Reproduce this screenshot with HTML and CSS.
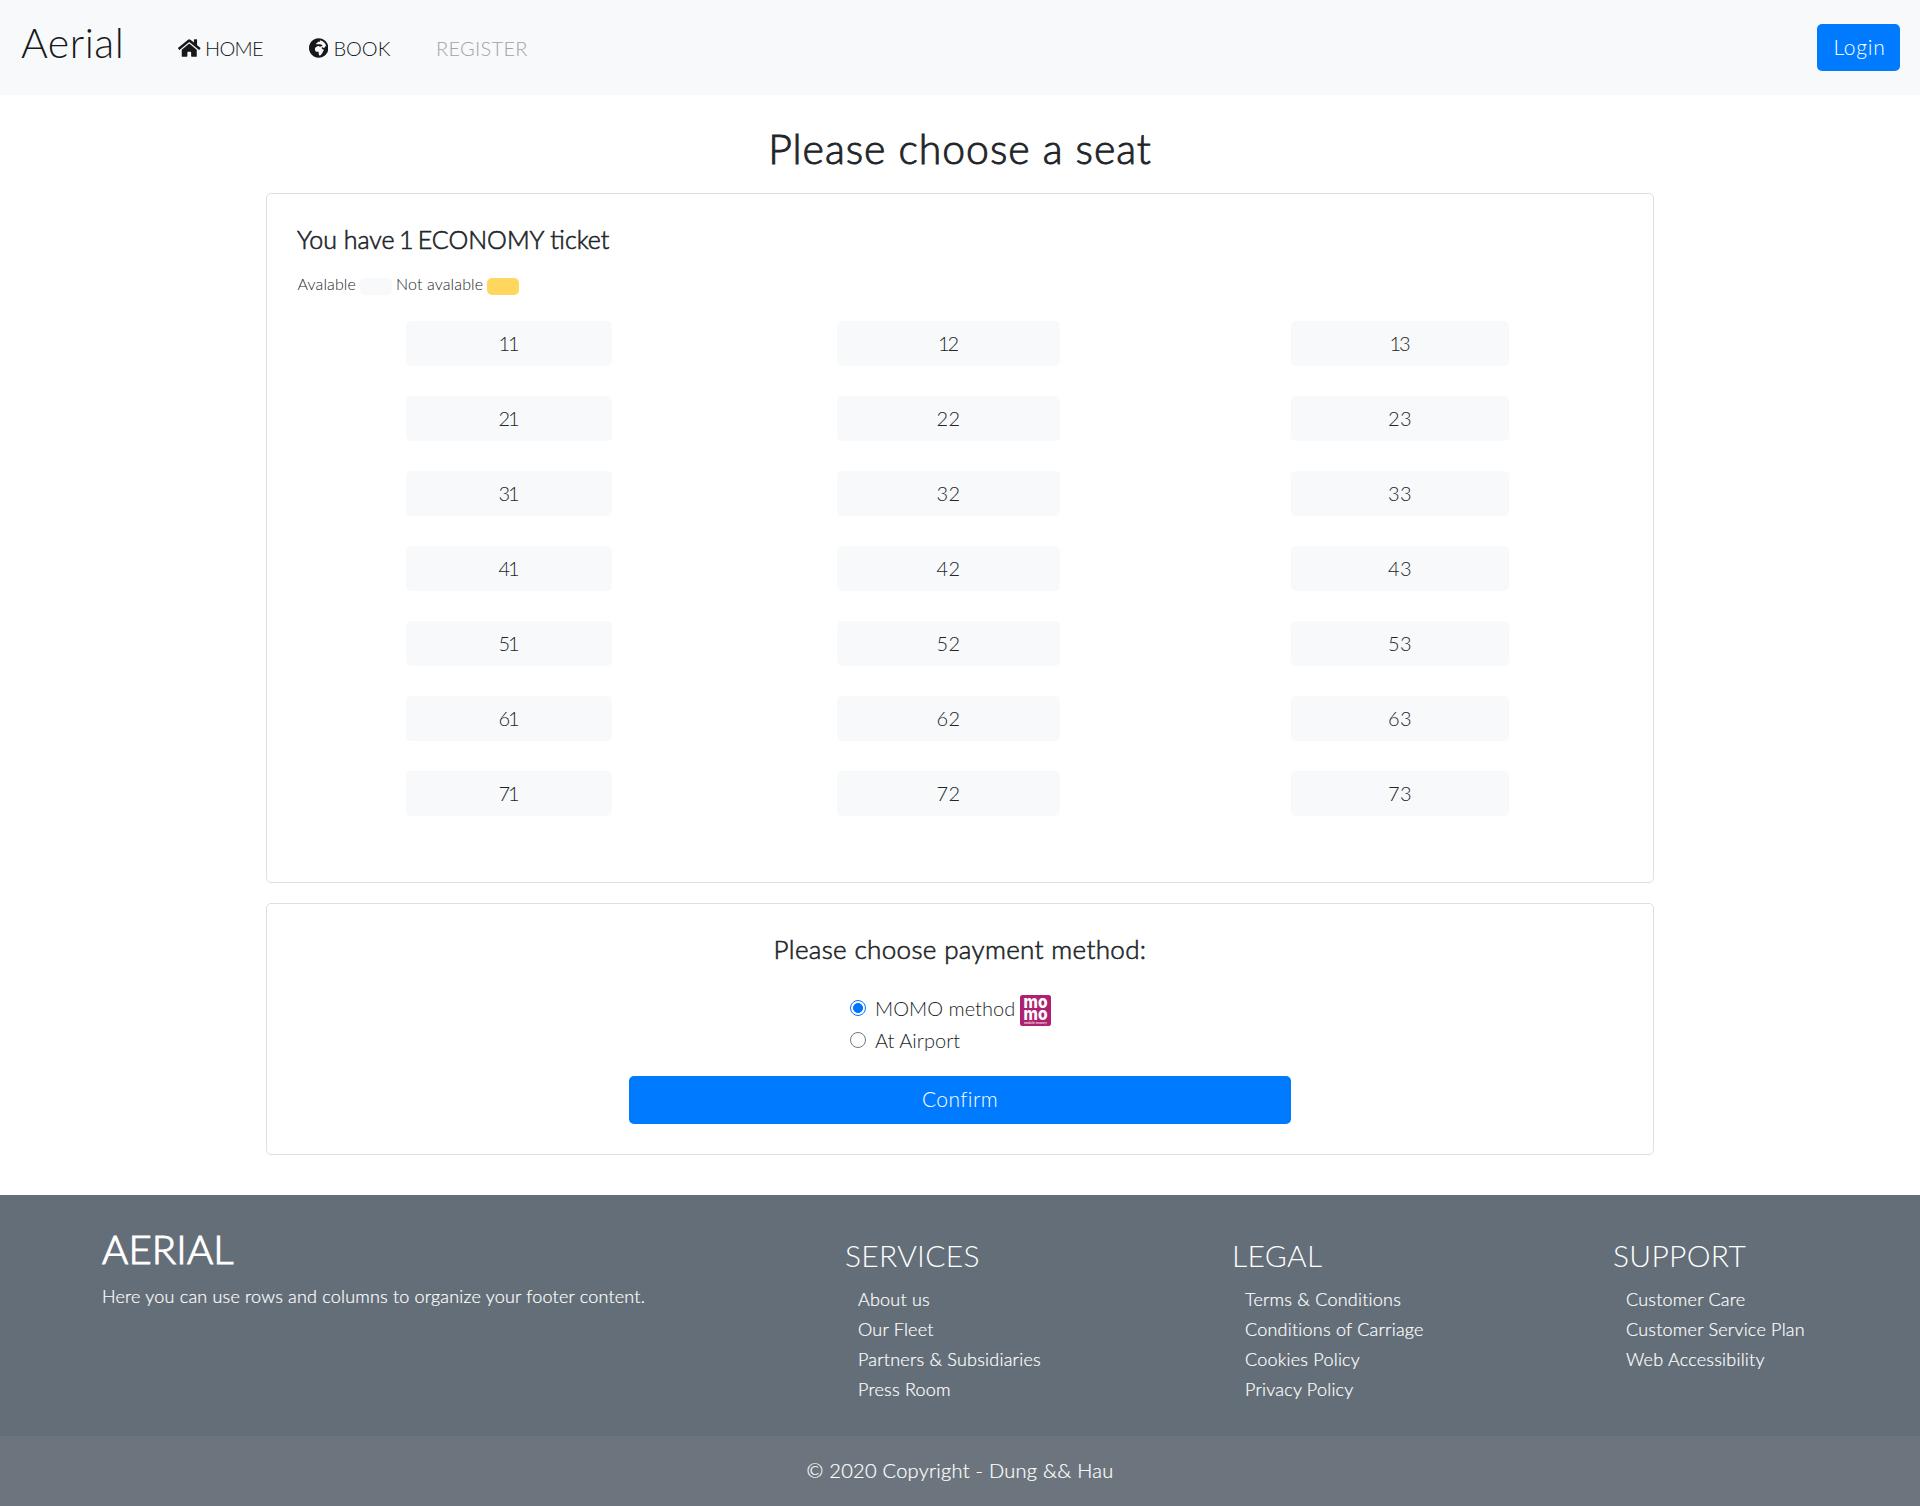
FILE: index.html
```html
<!DOCTYPE html>
<html lang="en">
<head>
<meta charset="utf-8">
<title>Aerial</title>
<link rel="stylesheet" href="styles.css">
</head>
<body>
<nav class="navbar">
  <a class="brand">Aerial</a>
  <a class="nav-link nav-home"><svg class="icon-home" viewBox="0 0 576 512"><path d="M280.37 148.26L96 300.11V464a16 16 0 0 0 16 16l112.06-.29a16 16 0 0 0 15.92-16V368a16 16 0 0 1 16-16h64a16 16 0 0 1 16 16v95.64a16 16 0 0 0 16 16.05L464 480a16 16 0 0 0 16-16V300L295.67 148.26a12.19 12.19 0 0 0-15.3 0zM571.6 251.47L488 182.56V44.05a12 12 0 0 0-12-12h-56a12 12 0 0 0-12 12v72.61L318.47 43a48 48 0 0 0-61 0L4.34 251.47a12 12 0 0 0-1.6 16.9l25.5 31A12 12 0 0 0 45.15 301l235.22-193.74a12.19 12.19 0 0 1 15.3 0L530.9 301a12 12 0 0 0 16.9-1.6l25.5-31a12 12 0 0 0-1.7-16.93z"/></svg>HOME</a>
  <a class="nav-link nav-book"><svg class="icon-globe" viewBox="0 0 496 512"><path d="M248 8C111.03 8 0 119.03 0 256s111.03 248 248 248 248-111.03 248-248S384.97 8 248 8zm160 215.5v6.93c0 5.87-3.32 11.24-8.57 13.86l-15.39 7.7a15.485 15.485 0 0 1-15.53-.97l-18.21-12.14a15.52 15.52 0 0 0-13.5-1.81l-2.65.88c-9.7 3.23-13.66 14.79-7.99 23.3l13.24 19.86c2.87 4.31 7.71 6.9 12.89 6.9h8.21c8.56 0 15.5 6.94 15.5 15.5v11.34c0 3.35-1.09 6.62-3.1 9.3l-18.74 24.98c-1.42 1.9-2.39 4.1-2.83 6.43l-4.3 22.83c-.62 3.29-2.29 6.29-4.76 8.56a159.608 159.608 0 0 0-25 29.16l-13.03 19.55a27.756 27.756 0 0 1-23.09 12.36c-10.51 0-20.12-5.94-24.82-15.34a78.902 78.902 0 0 1-8.33-35.29V367.5c0-8.56-6.94-15.5-15.5-15.5h-25.88c-14.49 0-28.38-5.76-38.63-16a54.659 54.659 0 0 1-16-38.63v-14.06c0-17.19 8.1-33.38 21.85-43.7l27.58-20.69a54.663 54.663 0 0 1 32.78-10.93h.89c8.48 0 16.85 1.97 24.43 5.77l14.72 7.36c3.68 1.84 7.93 2.14 11.83.84l47.31-15.77c6.33-2.11 10.6-8.03 10.6-14.7 0-8.56-6.94-15.5-15.5-15.5h-10.09c-4.11 0-8.05-1.63-10.96-4.54l-6.92-6.92a15.493 15.493 0 0 0-10.96-4.54H199.5c-8.56 0-15.5-6.94-15.5-15.5v-4.4c0-7.11 4.84-13.31 11.74-15.04l14.45-3.61c3.74-.94 7-3.23 9.14-6.44l8.08-12.11c2.87-4.31 7.71-6.9 12.89-6.9h24.21c8.56 0 15.5-6.94 15.5-15.5v-21.7C359.23 71.63 422.86 131.02 441.93 208H423.5c-8.56 0-15.5 6.94-15.5 15.5z"/></svg>BOOK</a>
  <a class="nav-link nav-muted">REGISTER</a>
  <button class="btn btn-login">Login</button>
</nav>
<main class="container">
  <h1 class="page-title">Please choose a seat</h1>
  <section class="card card-seats">
    <h2 class="card-title">You have <span class="count">1</span> ECONOMY ticket</h2>
    <p class="legend"><span>Avalable</span><i class="swatch"></i><span>Not avalable</span><i class="swatch swatch-taken"></i></p>
    <div class="seats">
      <button class="seat one">11</button><button class="seat one">12</button><button class="seat one">13</button>
      <button class="seat one">21</button><button class="seat">22</button><button class="seat">23</button>
      <button class="seat one">31</button><button class="seat">32</button><button class="seat">33</button>
      <button class="seat one">41</button><button class="seat">42</button><button class="seat">43</button>
      <button class="seat one">51</button><button class="seat">52</button><button class="seat">53</button>
      <button class="seat one">61</button><button class="seat">62</button><button class="seat">63</button>
      <button class="seat one">71</button><button class="seat">72</button><button class="seat">73</button>
    </div>
  </section>
  <section class="card card-payment">
    <h2 class="card-title payment-title">Please choose payment method:</h2>
    <div class="options">
      <label class="option"><input class="radio" type="radio" name="pay" checked><span>MOMO method</span>
        <svg class="momo" viewBox="0 0 31 31"><rect width="31" height="31" rx="2.5" fill="#ae2070"/><g class="momo-big"><text x="3.6" y="12.8" textLength="24" lengthAdjust="spacingAndGlyphs">mo</text><text x="3.6" y="25" textLength="24" lengthAdjust="spacingAndGlyphs">mo</text></g><text class="momo-small" x="4" y="28.8" textLength="23" lengthAdjust="spacingAndGlyphs">mobile money</text></svg></label>
      <label class="option"><input class="radio" type="radio" name="pay"><span>At Airport</span></label>
    </div>
    <button class="btn btn-confirm">Confirm</button>
  </section>
</main>
<footer class="footer">
  <div class="footer-main">
    <div><h2 class="footer-brand">AERIAL</h2><p class="footer-text">Here you can use rows and columns to organize your footer content.</p></div>
    <div class="footer-col"><h3 class="footer-title">SERVICES</h3><ul class="links"><li>About us</li><li>Our Fleet</li><li>Partners &amp; Subsidiaries</li><li>Press Room</li></ul></div>
    <div class="footer-col"><h3 class="footer-title">LEGAL</h3><ul class="links"><li>Terms &amp; Conditions</li><li>Conditions of Carriage</li><li>Cookies Policy</li><li>Privacy Policy</li></ul></div>
    <div class="footer-col"><h3 class="footer-title">SUPPORT</h3><ul class="links"><li>Customer Care</li><li>Customer Service Plan</li><li>Web Accessibility</li></ul></div>
  </div>
  <div class="copyright">© 2020 Copyright - Dung &amp;&amp; Hau</div>
</footer>
</body>
</html>
```
FILE: styles.css
```css
* { box-sizing: border-box; }
body { margin: 0; background: #fff; color: #212529; font: 300 20px/1.5 Lato, "Open Sans", sans-serif; font-kerning: normal; }
h1, h2, h3, p, ul { margin: 0; padding: 0; font-weight: 300; }
button { font: inherit; border: 0; padding: 0; border-radius: 5px; }

.navbar { display: flex; align-items: center; height: 95px; padding: 0 20px; background: #f8f9fb; }
.brand { width: 157px; margin-bottom: 10px; padding-left: 1px; font-size: 41px; line-height: 60px; letter-spacing: .5px; color: #16181b; }
.nav-link { display: flex; align-items: center; line-height: 30px; color: #16181b; }
.nav-home { width: 131px; gap: 4.5px; letter-spacing: -.7px; }
.nav-book { width: 128px; gap: 5px; }
.nav-muted { color: #a0a3a6; letter-spacing: .3px; }
.icon-home { width: 22.5px; height: 20px; margin-left: 1px; fill: #16181b; }
.icon-globe { width: 19.4px; height: 20px; margin-left: 1px; fill: #16181b; }

.btn { background: #007bff; color: #fff; }
.btn-login { width: 83px; height: 47px; margin-left: auto; padding: 0 0 1px 2px; font-size: 21px; letter-spacing: .8px; }

.container { width: 1388px; margin: 0 auto 40px; }
.page-title { padding: 30px 0 20px; font-size: 41px; line-height: 48px; text-align: center; letter-spacing: .95px; -webkit-text-stroke: .9px; }
.card { border: 1px solid #dfdfdf; border-radius: 5px; padding: 30px; }
.card-seats { height: 690px; margin-bottom: 20px; }
.card-title { font-size: 25px; line-height: 30px; -webkit-text-stroke: .6px; }
.count { margin: 0 -2.5px; }
.legend { display: flex; align-items: center; gap: 4px; height: 24px; margin: 18px 0 25px; padding-left: .5px; font-size: 16px; line-height: 24px; letter-spacing: .13px; }
.swatch { width: 32px; height: 17px; margin-top: 5px; border-radius: 5px; background: #f8f9fb; }
.swatch-taken { background: #ffd75e; }
.seats { display: grid; grid-template-columns: 206px 223px 224px; grid-auto-rows: 45px; gap: 30px 225px; padding-left: 109px; }
.seat { padding-bottom: 2px; background: #f8f9fb; color: #212529; letter-spacing: .4px; }
.seat:nth-child(3n) { margin-left: 6px; }
.one { padding-right: 2px; letter-spacing: -2.2px; }

.card-payment { display: flex; flex-direction: column; align-items: center; height: 252px; }
.payment-title { font-size: 26px; letter-spacing: .35px; }
.options { width: 220px; margin: 28px 0 20px; }
.option { display: flex; align-items: center; height: 32px; letter-spacing: .03px; }
.radio { appearance: none; width: 16px; height: 16px; margin: 0 9px 0 0; border: 1px solid #767676; border-radius: 50%; }
.radio:checked { border-color: #0075ff; background: radial-gradient(circle, #0075ff 0 4.6px, #fff 5.3px); }
.momo { width: 31px; height: 31px; margin: 0 0 -5px 5px; overflow: visible; }
.momo text { fill: #fff; font-family: Inter, sans-serif; }
.momo-big { font-size: 18px; font-weight: 800; }
.momo-small { font-size: 3px; font-weight: 700; opacity: .75; }
.btn-confirm { width: 662px; height: 48px; padding-bottom: 2px; font-size: 21px; letter-spacing: .4px; }

.footer { color: #fff; background: #646e78; }
.footer-main { display: grid; grid-template-columns: 743px 387px 381px auto; height: 241px; padding: 30px 0 0 102px; }
.footer-brand { font-size: 40px; line-height: 48px; letter-spacing: .2px; -webkit-text-stroke: 1.1px; }
.footer-text { margin-top: 10px; font-size: 18px; line-height: 27px; letter-spacing: .19px; -webkit-text-stroke: .2px; }
.footer-col { padding-top: 12px; }
.footer-title { font-size: 30px; line-height: 36px; letter-spacing: .3px; }
.links { margin-top: 11px; padding-left: 13px; list-style: none; font-size: 18px; line-height: 30px; letter-spacing: .22px; -webkit-text-stroke: .2px; }
.copyright { height: 70px; line-height: 68px; text-align: center; letter-spacing: .28px; background: #6c757d; -webkit-text-stroke: .2px; }
```
